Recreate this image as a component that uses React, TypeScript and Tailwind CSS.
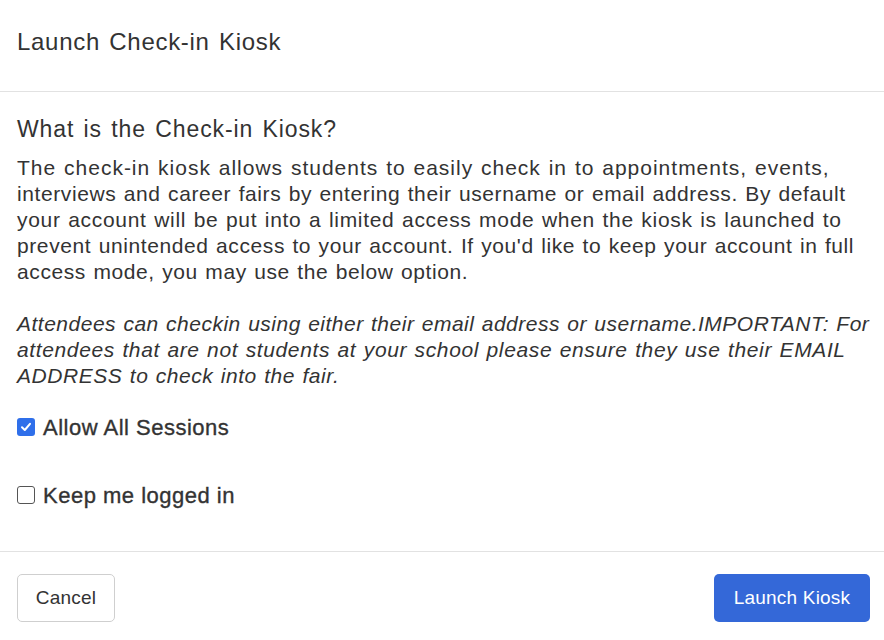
import React from "react";

function Check({ checked }: { checked: boolean }) {
  return checked ? (
    <span className="flex h-[18px] w-[18px] shrink-0 items-center justify-center rounded-[3px] bg-[#2f6fea]">
      <svg width="12" height="12" viewBox="0 0 12 12" fill="none">
        <path d="M2 6.3 L4.8 9 L10 2.8" stroke="white" strokeWidth="2" strokeLinecap="round" strokeLinejoin="round" />
      </svg>
    </span>
  ) : (
    <span className="h-[18px] w-[18px] shrink-0 rounded-[3px] border-[1.5px] border-[#555] bg-white" />
  );
}

export default function App() {
  return (
    <div className="w-[884px] bg-white text-[#333]" style={{ fontFamily: '"Liberation Sans", Arial, sans-serif' }}>
      <div className="h-[92px] border-b border-[#e2e2e2] pl-[17px] pt-[26px]">
        <h1 className="text-[24px] leading-[32px] tracking-[0.7px] [word-spacing:2px] text-[#333]">Launch Check-in Kiosk</h1>
      </div>
      <div className="pl-[17px] pr-[14px] pt-[23px]">
        <h2 className="text-[23px] leading-[28px] tracking-[0.9px] [word-spacing:2px]">What is the Check-in Kiosk?</h2>
        <p className="mt-[12px] whitespace-nowrap text-[21px] leading-[26px] tracking-[0.6px] [word-spacing:1px]">
          <span className="tracking-[1px]">The check-in kiosk allows students to easily check in to appointments, events,</span>
          <br />
          interviews and career fairs by entering their username or email address. By default
          <br />
          <span className="tracking-[0.7px]">your account will be put into a limited access mode when the kiosk is launched to</span>
          <br />
          prevent unintended access to your account. If you'd like to keep your account in full
          <br />
          access mode, you may use the below option.
        </p>
        <p className="mt-[26px] whitespace-nowrap text-[21px] italic leading-[26px] tracking-[0.55px] [word-spacing:1px]">
          <span className="tracking-[0.5px]">Attendees can checkin using either their email address or username.IMPORTANT: For</span>
          <br />
          <span className="tracking-[0.63px]">attendees that are not students at your school please ensure they use their EMAIL</span>
          <br />
          ADDRESS to check into the fair.
        </p>
        <label className="mt-[25px] flex h-[26px] items-center gap-[8px] text-[22px] tracking-[0.5px] [-webkit-text-stroke:0.35px_#333]">
          <Check checked={true} />
          <span>Allow All Sessions</span>
        </label>
        <label className="mt-[42px] flex h-[26px] items-center gap-[8px] text-[22px] tracking-[0.5px] [-webkit-text-stroke:0.35px_#333]">
          <Check checked={false} />
          <span>Keep me logged in</span>
        </label>
      </div>
      <div className="mt-[43px] flex items-center justify-between border-t border-[#e2e2e2] pb-[18px] pl-[17px] pr-[14px] pt-[22px]">
        <button className="h-[48px] w-[98px] rounded-[5px] border border-[#cfcfcf] bg-white text-[19px] tracking-[0.2px] text-[#333]">Cancel</button>
        <button className="h-[48px] w-[156px] rounded-[5px] bg-[#3468d8] text-[19px] tracking-[0.2px] text-white">Launch Kiosk</button>
      </div>
    </div>
  );
}
